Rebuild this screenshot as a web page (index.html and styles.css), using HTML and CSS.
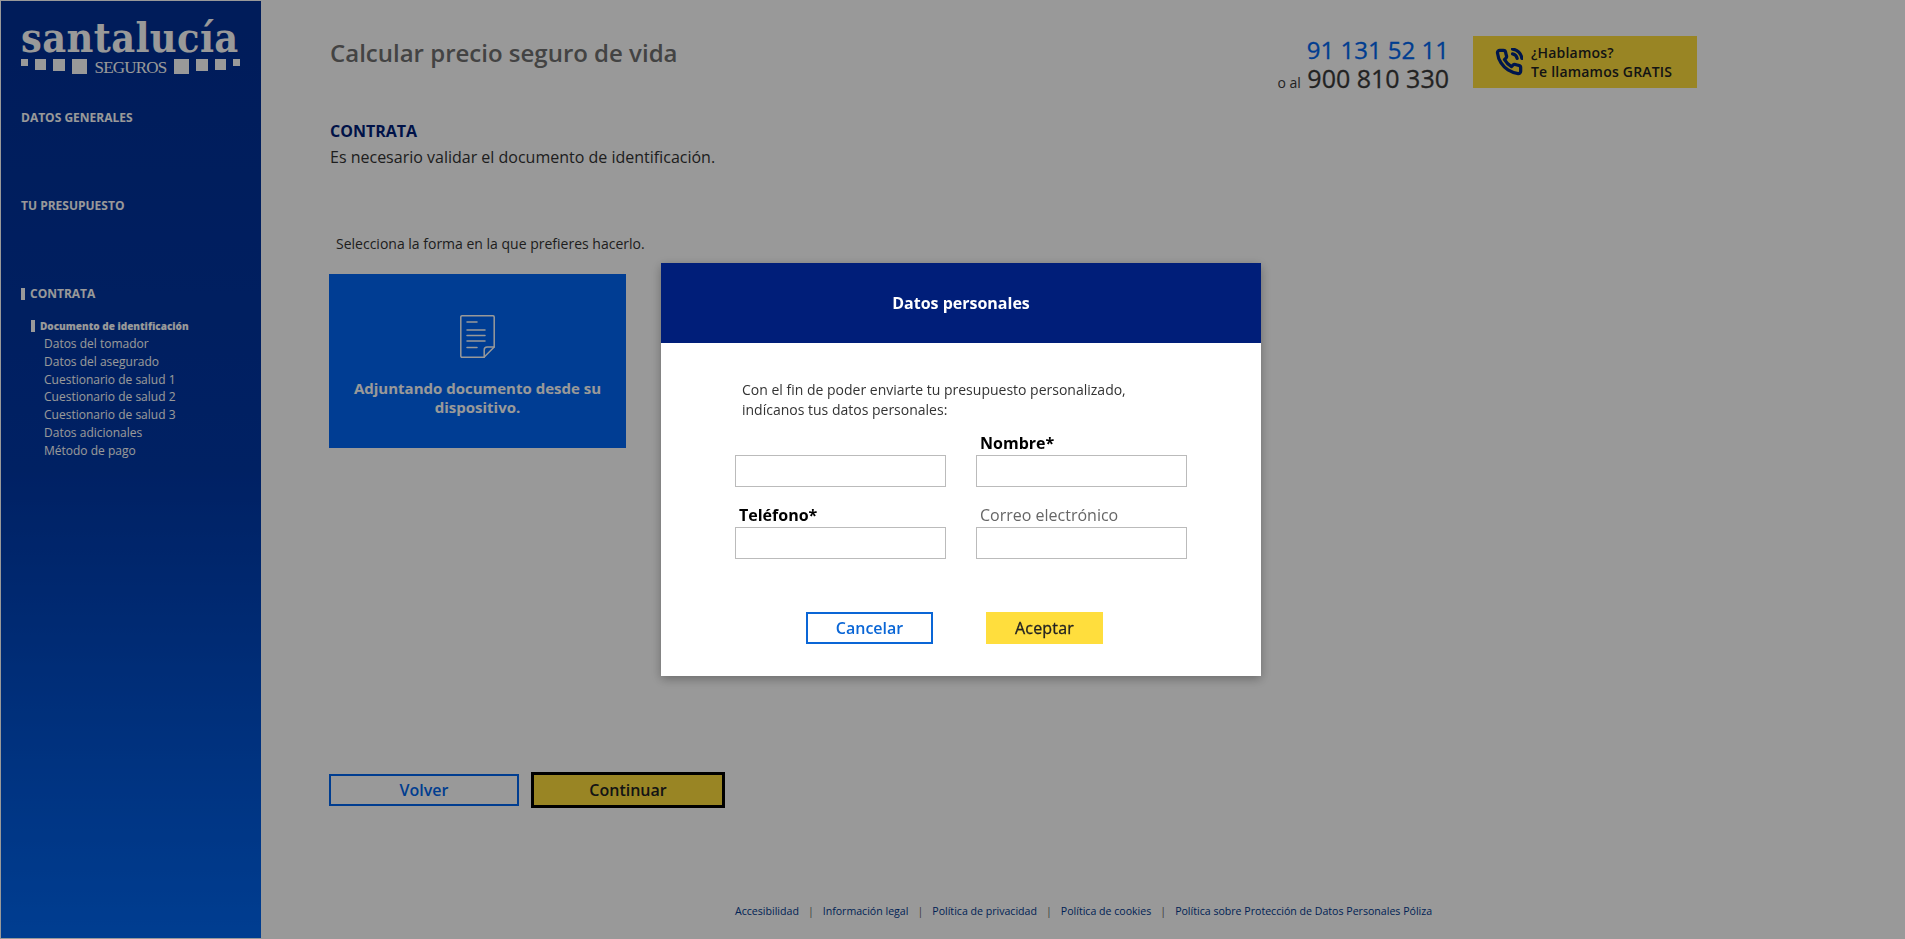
FILE: index.html
```html
<!DOCTYPE html>
<html lang="en">
<head>
  <meta charset="UTF-8" />
  <title>Calcular precio seguro de vida</title>
  <link rel="stylesheet" href="styles.css">
</head>
<body>

<div class="page">
  <aside class="sidebar">
    <div class="logo">
      <div class="logo-name">santalucía</div>
      <div class="logo-row">
        <span class="sq sq1"></span>
        <span class="sq sq2"></span>
        <span class="sq sq3"></span>
        <span class="sq sq4"></span>
        <span class="logo-sub">SEGUROS</span>
        <span class="sq sq4"></span>
        <span class="sq sq3"></span>
        <span class="sq sq2"></span>
        <span class="sq sq1"></span>
      </div>
    </div>
    <nav class="nav">
      <div class="nav-title">DATOS GENERALES</div>
      <div class="nav-title">TU PRESUPUESTO</div>
      <div class="nav-title active">CONTRATA</div>
      <ul class="nav-list">
        <li class="current">Documento de identificación</li>
        <li>Datos del tomador</li>
        <li>Datos del asegurado</li>
        <li>Cuestionario de salud 1</li>
        <li>Cuestionario de salud 2</li>
        <li>Cuestionario de salud 3</li>
        <li>Datos adicionales</li>
        <li>Método de pago</li>
      </ul>
    </nav>
  </aside>

  <main class="main">
    <header class="header">
      <h1 class="title">Calcular precio seguro de vida</h1>
      <div class="contact">
        <div class="phones">
          <div class="phone-blue">91 131 52 11</div>
          <div class="phone-free"><small>o al</small> 900 810 330</div>
        </div>
        <a class="call-btn">
          <svg class="call-icon" viewBox="0 0 24 24" fill="none" stroke="#00267f" stroke-width="2.8" stroke-linecap="round" stroke-linejoin="round">
            <path d="M15.05 5A5 5 0 0 1 19 8.95M15.05 1A9 9 0 0 1 23 8.94m-1 7.98v3a2 2 0 0 1-2.18 2 19.79 19.79 0 0 1-8.63-3.07 19.5 19.5 0 0 1-6-6 19.79 19.79 0 0 1-3.07-8.67A2 2 0 0 1 4.11 2h3a2 2 0 0 1 2 1.72 12.84 12.84 0 0 0 .7 2.81 2 2 0 0 1-.45 2.11L8.09 9.91a16 16 0 0 0 6 6l1.27-1.27a2 2 0 0 1 2.11-.45 12.84 12.84 0 0 0 2.81.7A2 2 0 0 1 22 16.92z"/>
          </svg>
          <span>¿Hablamos?<br>Te llamamos GRATIS</span>
        </a>
      </div>
    </header>

    <h2 class="section">CONTRATA</h2>
    <p class="section-text">Es necesario validar el documento de identificación.</p>
    <p class="select-text">Selecciona la forma en la que prefieres hacerlo.</p>

    <div class="card">
      <svg class="doc-icon" viewBox="0 0 35 43" fill="none" stroke="#fff" stroke-width="1.5" stroke-linecap="round" stroke-linejoin="round">
        <path d="M2 .8h31a1.2 1.2 0 0 1 1.2 1.2v30L24 42.2H2A1.2 1.2 0 0 1 .8 41V2A1.2 1.2 0 0 1 2 .8z"/>
        <path d="M34.200 32h-7a3 3 0 0 0-3 3v7.200"/>
        <path d="M7 7h10M7 15h18M7 20.500h18M7 26h18M7 32.500h10"/>
      </svg>
      <div class="card-text">Adjuntando documento desde su dispositivo.</div>
    </div>

    <div class="actions">
      <button class="btn-back">Volver</button>
      <button class="btn-next">Continuar</button>
    </div>

    <footer class="footer">
      <a>Accesibilidad</a><i>|</i><a>Información legal</a><i>|</i><a>Política de privacidad</a><i>|</i><a>Política de cookies</a><i>|</i><a>Política sobre Protección de Datos Personales Póliza</a>
    </footer>
  </main>
</div>

<div class="overlay">
  <div class="modal">
    <div class="modal-head">Datos personales</div>
    <div class="modal-body">
      <p class="modal-text">Con el fin de poder enviarte tu presupuesto personalizado,<br>indícanos tus datos personales:</p>
      <div class="form-grid">
        <div class="field">
          <label>&nbsp;</label>
          <input type="text" />
        </div>
        <div class="field">
          <label>Nombre*</label>
          <input type="text" />
        </div>
        <div class="field">
          <label>Teléfono*</label>
          <input type="text" />
        </div>
        <div class="field">
          <label class="optional">Correo electrónico</label>
          <input type="text" />
        </div>
      </div>
      <div class="modal-actions">
        <button class="btn-cancel">Cancelar</button>
        <button class="btn-ok">Aceptar</button>
      </div>
    </div>
  </div>
</div>

</body>
</html>
```

FILE: styles.css
```css
* {
  box-sizing: border-box;
}
html, body {
  height: 100%;
}
body {
  margin: 0;
  font-family: "Open Sans", Arial, sans-serif;
  background: #fff;
  color: #333;
  overflow: hidden;
}
.page {
  display: flex;
  height: 939px;
  padding: 1px;
}

/* sidebar */
.sidebar {
  width: 260px;
  flex-shrink: 0;
  padding: 19px 20px 0;
  color: #fff;
  background: linear-gradient(to bottom, #002f96 0%, #0037a6 50%, #0067f2 100%);
}
.logo-name {
  font-family: "DejaVu Serif Condensed", "DejaVu Serif", serif;
  font-weight: bold;
  font-size: 41px;
  line-height: 36px;
  width: 219px;
  white-space: nowrap;
  letter-spacing: 0.4px;
}
.logo-row {
  display: flex;
  align-items: flex-start;
  width: 219px;
  margin-top: 3px;
  justify-content: space-between;
}
.sq {
  display: block;
  background: #fff;
}
.sq1 { width: 7px; height: 7px; }
.sq2 { width: 11px; height: 11px; }
.sq3 { width: 12px; height: 12px; }
.sq4 { width: 15px; height: 15px; }
.logo-sub {
  font-family: "Liberation Serif", serif;
  font-size: 17px;
  line-height: 15px;
  letter-spacing: -0.8px;
  margin-top: 1px;
}
.nav {
  margin-top: 34px;
}
.nav-title {
  font-size: 12px;
  font-weight: 700;
  line-height: 18px;
  height: 88px;
}
.nav-title.active {
  height: auto;
  border-left: 4px solid #fff;
  padding-left: 5px;
  line-height: 12px;
  margin-top: 3px;
}
.nav-list {
  list-style: none;
  margin: 20px 0 0;
  padding: 0 0 0 23px;
  font-size: 12px;
  line-height: 17.8px;
}
.nav-list .current {
  font-size: 10px;
  font-weight: 800;
  margin-left: -13px;
  padding-left: 5px;
  border-left: 4px solid #fff;
  line-height: 12px;
  margin-bottom: 3px;
}

/* main */
.main {
  flex: 1;
  display: flex;
  flex-direction: column;
  align-items: flex-start;
  padding: 35px 207px 0 68px;
}
.header {
  width: 100%;
  height: 52px;
  display: flex;
  justify-content: space-between;
  align-items: flex-start;
}
.title {
  margin: 1px 0 0 1px;
  font-size: 24px;
  line-height: 32px;
  font-weight: 600;
  color: #707070;
}
.contact {
  display: flex;
  gap: 24px;
}
.phones {
  text-align: right;
  -webkit-text-stroke: 0.3px;
}
.phone-blue {
  font-size: 24px;
  line-height: 28px;
  color: #0067f0;
}
.phone-free {
  font-size: 25px;
  line-height: 28px;
  color: #3a3a3a;
}
.phone-free small {
  font-size: 14px;
  -webkit-text-stroke: 0;
}
.call-btn {
  width: 224px;
  height: 52px;
  background: #ffde3d;
  color: #222;
  display: flex;
  align-items: center;
  gap: 8px;
  padding-left: 22px;
  font-size: 14px;
  font-weight: 600;
  line-height: 19px;
  letter-spacing: 0.2px;
}
.call-icon {
  width: 28px;
  height: 28px;
}
.section {
  margin: 32px 0 0 1px;
  font-size: 16px;
  line-height: 22px;
  font-weight: 700;
  color: #001e79;
}
.section-text {
  margin: 4px 0 0 1px;
  font-size: 16px;
  line-height: 22px;
  color: #333;
}
.select-text {
  margin: 66px 0 0 7px;
  font-size: 14px;
  line-height: 19px;
  color: #333;
}
.card {
  width: 297px;
  height: 174px;
  margin-top: 21px;
  background: #0067f5;
  color: #fff;
  display: flex;
  flex-direction: column;
  align-items: center;
  padding-top: 41px;
}
.doc-icon {
  width: 35px;
  height: 43px;
}
.card-text {
  margin-top: 21px;
  width: 270px;
  text-align: center;
  font-size: 15px;
  line-height: 19px;
  font-weight: 700;
}
.actions {
  display: flex;
  align-items: center;
  gap: 12px;
  margin-top: 324px;
}
.actions button {
  font-family: inherit;
  font-size: 16px;
  font-weight: 600;
}
.btn-back {
  width: 190px;
  height: 32px;
  background: none;
  border: 2px solid #0067f0;
  color: #0067f0;
}
.btn-next {
  width: 194px;
  height: 36px;
  background: #ffde3d;
  border: 3px solid #000;
  color: #222;
}
.footer {
  margin: 96px 0 0 406px;
  font-size: 10.6px;
  line-height: 14px;
  color: #00398f;
  white-space: nowrap;
}
.footer i {
  font-style: normal;
  margin: 0 9px;
  color: #666;
}

/* modal */
.overlay {
  position: fixed;
  top: 0;
  left: 0;
  right: 0;
  bottom: 0;
  background: rgba(0, 0, 0, 0.4);
  padding: 263px 0 0 661px;
}
.modal {
  width: 600px;
  height: 413px;
  background: #fff;
  box-shadow: 0 3px 10px rgba(0, 0, 0, 0.3);
}
.modal-head {
  height: 80px;
  line-height: 80px;
  background: #001e79;
  color: #fff;
  text-align: center;
  font-size: 16px;
  font-weight: 700;
}
.modal-body {
  padding: 37px 0 0 74px;
}
.modal-text {
  margin: 0 0 0 7px;
  font-size: 14px;
  line-height: 20px;
  color: #333;
}
.form-grid {
  display: grid;
  grid-template-columns: 211px 211px;
  column-gap: 30px;
  row-gap: 16px;
  margin-top: 11px;
}
.field label {
  display: block;
  padding-left: 4px;
  font-size: 16px;
  font-weight: 700;
  line-height: 24px;
  color: #000;
}
.field label.optional {
  font-weight: 400;
  color: #666;
}
.field input {
  display: block;
  width: 100%;
  height: 32px;
  border: 1px solid #bbb;
  background: #fff;
}
.modal-actions {
  display: flex;
  gap: 53px;
  margin: 53px 0 0 71px;
}
.modal-actions button {
  height: 32px;
  font-family: inherit;
  font-size: 16px;
}
.btn-cancel {
  width: 127px;
  background: #fff;
  border: 2px solid #0a66d6;
  color: #0a66d6;
  font-weight: 600;
}
.btn-ok {
  width: 117px;
  background: #ffde3d;
  border: none;
  color: #222;
  letter-spacing: 0.2px;
  -webkit-text-stroke: 0.3px;
}
```
